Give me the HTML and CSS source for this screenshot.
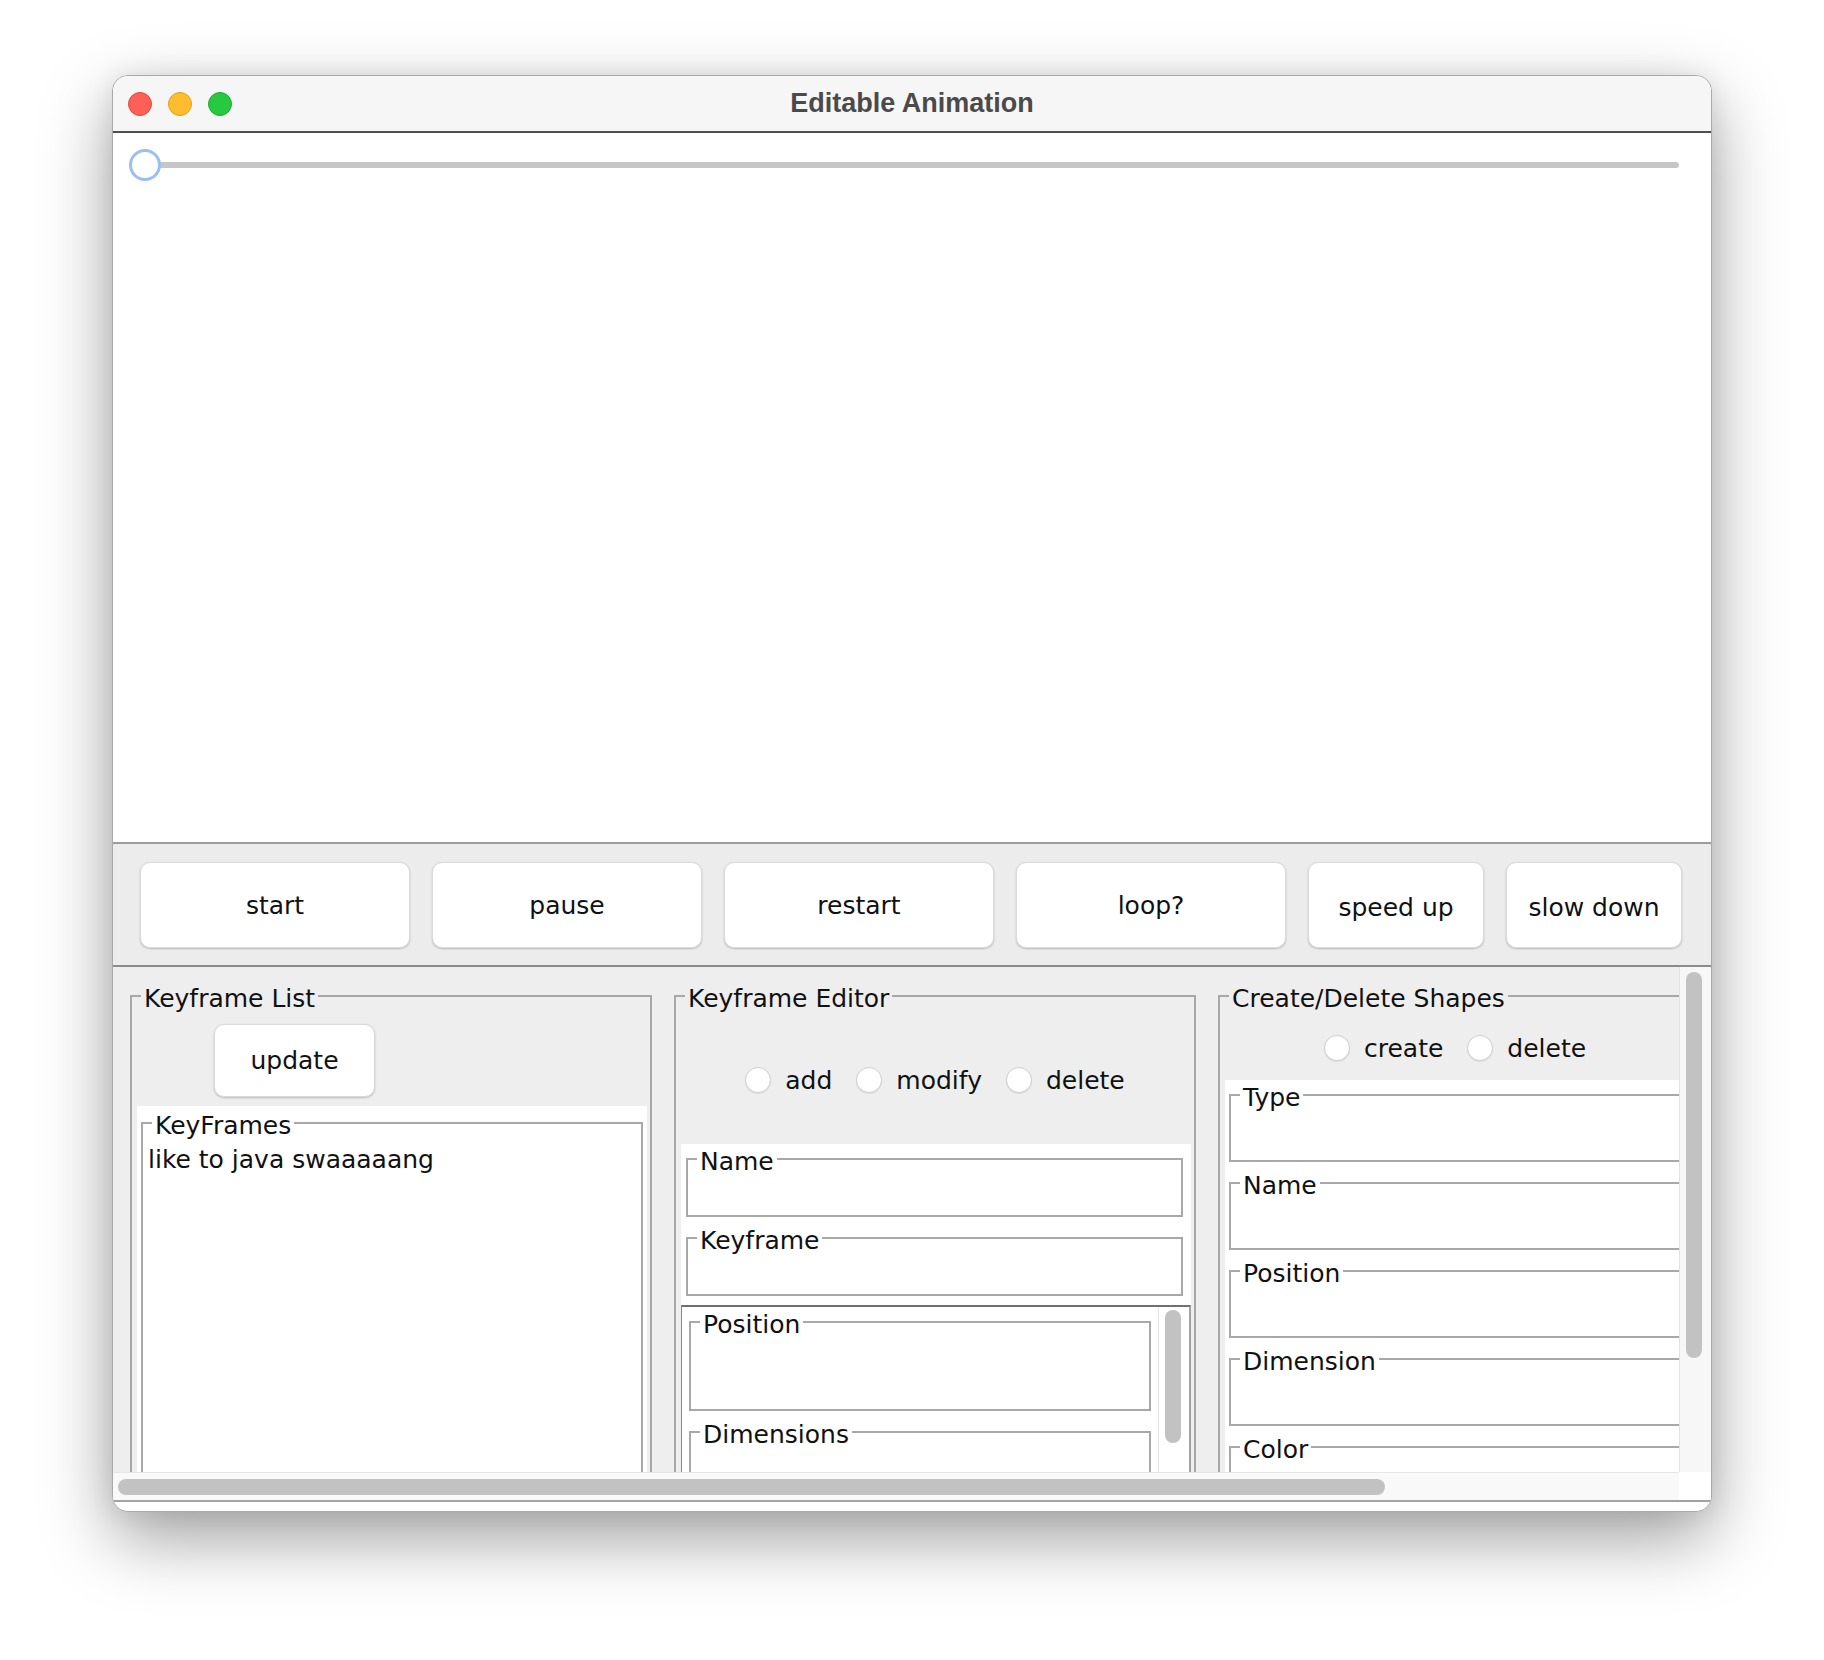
FILE: index.html
```html
<!DOCTYPE html>
<html lang="en">
  <head>
    <meta charset="UTF-8" />
    <title>Editable Animation</title>
    <link rel="stylesheet" href="styles.css">
  </head>
  <body>
    <div class="window">
      <!-- Title bar -->
      <div class="titlebar">
        <div class="lights">
          <span class="light close"></span>
          <span class="light min"></span>
          <span class="light max"></span>
        </div>
        <div class="title">Editable Animation</div>
        <div></div>
      </div>

      <!-- Animation canvas with timeline slider -->
      <div class="canvas">
        <div class="slider">
          <span class="knob"></span>
          <span class="track"></span>
        </div>
      </div>

      <!-- Playback controls -->
      <div class="controls">
        <button class="btn">start</button>
        <button class="btn">pause</button>
        <button class="btn">restart</button>
        <button class="btn">loop?</button>
        <button class="btn narrow">speed up</button>
        <button class="btn narrow">slow down</button>
      </div>

      <!-- Editor scroll pane -->
      <div class="pane">
        <div class="viewport">
          <div class="panels">
            <fieldset class="group panel">
              <legend>Keyframe List</legend>
              <button class="btn update">update</button>
              <div class="sheet list-sheet">
                <fieldset class="group keyframes">
                  <legend>KeyFrames</legend>
                  <div class="entry">like to java swaaaaang</div>
                </fieldset>
              </div>
            </fieldset>

            <fieldset class="group panel">
              <legend>Keyframe Editor</legend>
              <div class="radios">
                <label class="radio"><span class="dot"></span>add</label>
                <label class="radio"><span class="dot"></span>modify</label>
                <label class="radio"><span class="dot"></span>delete</label>
              </div>
              <div class="sheet editor-sheet">
                <fieldset class="group field">
                  <legend>Name</legend>
                  <div class="box"></div>
                </fieldset>
                <fieldset class="group field">
                  <legend>Keyframe</legend>
                  <div class="box"></div>
                </fieldset>
                <div class="inner-pane">
                  <div class="inner-col">
                    <fieldset class="group field">
                      <legend>Position</legend>
                      <div class="box tall"></div>
                    </fieldset>
                    <fieldset class="group field">
                      <legend>Dimensions</legend>
                      <div class="box tall"></div>
                    </fieldset>
                  </div>
                  <div class="inner-bar"><div class="thumb"></div></div>
                </div>
              </div>
            </fieldset>

            <fieldset class="group panel wide">
              <legend>Create/Delete Shapes</legend>
              <div class="radios shape-radios">
                <label class="radio"><span class="dot"></span>create</label>
                <label class="radio"><span class="dot"></span>delete</label>
              </div>
              <div class="sheet shape-sheet">
                <fieldset class="group field">
                  <legend>Type</legend>
                  <div class="box mid"></div>
                </fieldset>
                <fieldset class="group field">
                  <legend>Name</legend>
                  <div class="box mid"></div>
                </fieldset>
                <fieldset class="group field">
                  <legend>Position</legend>
                  <div class="box mid"></div>
                </fieldset>
                <fieldset class="group field">
                  <legend>Dimension</legend>
                  <div class="box mid"></div>
                </fieldset>
                <fieldset class="group field">
                  <legend>Color</legend>
                  <div class="box mid"></div>
                </fieldset>
              </div>
            </fieldset>
          </div>
        </div>
        <div class="vbar"><div class="thumb"></div></div>
        <div class="hbar"><div class="thumb"></div></div>
        <div class="corner"></div>
      </div>
      <div class="foot"></div>
    </div>
  </body>
</html>
```

FILE: styles.css
```css
html {
  background: #fff;
}
body {
  margin: 0;
  min-height: 1660px;
  box-sizing: border-box;
  padding: 75px 0 0 112px;
  background: #fff;
  font-family: "DejaVu Sans", sans-serif;
  font-size: 25px;
  color: #111;
}
.window {
  width: 1600px;
  height: 1437px;
  box-sizing: border-box;
  border: 1px solid #a9a9a9;
  border-radius: 16px;
  overflow: hidden;
  background: #ececec;
  display: flex;
  flex-direction: column;
  box-shadow: 0 26px 70px rgba(0, 0, 0, 0.38), 0 0 24px rgba(0, 0, 0, 0.08);
}

/* title bar */
.titlebar {
  flex: none;
  height: 55px;
  padding: 0 15px;
  display: grid;
  grid-template-columns: 1fr auto 1fr;
  align-items: center;
  background: #f6f6f6;
  border-bottom: 2px solid #4e4e4e;
}
.lights {
  display: flex;
  gap: 16px;
}
.light {
  width: 24px;
  height: 24px;
  box-sizing: border-box;
  border-radius: 50%;
}
.close {
  background: #fe5f57;
  border: 1px solid #e2463f;
}
.min {
  background: #febc2e;
  border: 1px solid #e1a116;
}
.max {
  background: #28c840;
  border: 1px solid #17ae2f;
}
.title {
  font: bold 27px "Liberation Sans", Arial, sans-serif;
  color: #4a4a4a;
}

/* canvas */
.canvas {
  flex: none;
  height: 709px;
  background: #fff;
  border-bottom: 2px solid #9c9c9c;
}
.slider {
  display: flex;
  align-items: center;
  padding: 16px 32px 0 16px;
}
.knob {
  flex: none;
  width: 32px;
  height: 32px;
  box-sizing: border-box;
  border: 3px solid #98c0f3;
  border-radius: 50%;
  background: #fff;
  position: relative;
  z-index: 1;
}
.track {
  flex: 1;
  height: 6px;
  margin-left: -16px;
  border-radius: 3px;
  background: #c6c6c6;
}

/* controls */
.controls {
  flex: none;
  height: 123px;
  box-sizing: border-box;
  padding: 18px 0 0 27px;
  display: flex;
  gap: 22px;
  align-items: flex-start;
  border-bottom: 2px solid #8b8b8b;
}
.btn {
  font: inherit;
  color: #111;
  width: 270px;
  height: 86px;
  padding: 0;
  background: #fff;
  border: 1px solid #dadada;
  border-radius: 10px;
  box-shadow: 0 1px 2px rgba(0, 0, 0, 0.22);
}
.btn.narrow {
  width: 176px;
  padding-top: 4px;
}

/* scroll pane */
.pane {
  flex: none;
  display: grid;
  grid-template-columns: 1566px 32px;
  grid-template-rows: 505px 28px;
}
.viewport {
  overflow: hidden;
  background: #eeeeee;
}
.vbar {
  background: #f7f7f7;
  border-left: 1px solid #e2e2e2;
}
.vbar .thumb {
  width: 16px;
  height: 386px;
  margin: 5px 0 0 6px;
  border-radius: 8px;
  background: #c2c2c2;
}
.hbar {
  background: #f9f9f9;
  border-top: 1px solid #e6e6e6;
}
.hbar .thumb {
  width: 1267px;
  height: 16px;
  margin: 6px 0 0 5px;
  border-radius: 8px;
  background: #c2c2c2;
}
.corner {
  background: #fff;
}
.foot {
  flex: 1;
  background: #fff;
  border-top: 2px solid #a3a3a3;
}

/* panels */
.panels {
  display: flex;
  gap: 22px;
  padding: 14px 0 0 17px;
  align-items: flex-start;
}
.group {
  margin: 0;
  padding: 0;
  min-width: 0;
  box-sizing: border-box;
  border: 2px solid #a8a8a8;
}
.group legend {
  margin-left: 9px;
  padding: 6px 3px 0;
  font-size: 25px;
  line-height: 24px;
}
.panel {
  width: 522px;
  height: 700px;
  flex: none;
}
.panel.wide {
  width: 800px;
}
.sheet {
  background: #fff;
}
.update {
  display: block;
  width: 161px;
  height: 73px;
  margin: 13px 0 0 82px;
}
.list-sheet {
  margin: 9px 3px 0 5px;
  padding: 2px 4px 0;
  height: 600px;
}
.keyframes {
  height: 560px;
}
.entry {
  padding: 8px 0 0 5px;
  line-height: 28px;
}

.radios {
  display: flex;
  justify-content: center;
  align-items: center;
  gap: 24px;
  height: 30px;
  margin-top: 54px;
}
.radio {
  display: flex;
  align-items: center;
  gap: 14px;
}
.dot {
  width: 26px;
  height: 26px;
  box-sizing: border-box;
  border-radius: 50%;
  background: #fff;
  border: 1px solid #cfcfcf;
  box-shadow: 0 1px 1px rgba(0, 0, 0, 0.08);
}
.shape-radios {
  justify-content: flex-start;
  padding-left: 104px;
  margin-top: 22px;
}

.field + .field {
  margin-top: 6px;
}
.box {
  height: 41px;
}
.box.mid {
  height: 50px;
}
.box.tall {
  height: 72px;
}
.editor-sheet {
  margin: 49px 3px 0 5px;
  height: 600px;
}
.editor-sheet > .field {
  margin-left: 5px;
  margin-right: 8px;
}
.inner-pane {
  margin-top: 9px;
  height: 300px;
  display: flex;
  border-top: 2px solid #707070;
  border-left: 1px solid #8a8a8a;
  border-right: 2px solid #a2a2a2;
}
.inner-col {
  flex: 1;
  padding: 0 7px;
}
.inner-bar {
  width: 30px;
  border-left: 1px solid #e6e6e6;
}
.inner-bar .thumb {
  width: 16px;
  height: 133px;
  margin: 3px 0 0 6px;
  border-radius: 8px;
  background: #c2c2c2;
}
.shape-sheet {
  margin: 17px 0 0 5px;
  padding-left: 4px;
  height: 600px;
}
```
